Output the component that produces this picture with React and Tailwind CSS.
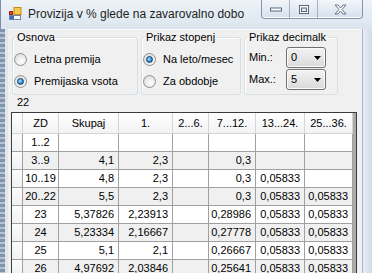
import React from "react";

const columns = [
  { title: "ZD", width: "w-[36px]" },
  { title: "Skupaj", width: "w-[60px]" },
  { title: "1.", width: "w-[54px]" },
  { title: "2...6.", width: "w-[36px]" },
  { title: "7...12.", width: "w-[47px]" },
  { title: "13...24.", width: "w-[49px]" },
  { title: "25...36.", width: "w-[48px]" },
];

const rows = [
  ["1..2", "", "", "", "", "", ""],
  ["3..9", "4,1", "2,3", "", "0,3", "", ""],
  ["10..19", "4,8", "2,3", "", "0,3", "0,05833", ""],
  ["20..22", "5,5", "2,3", "", "0,3", "0,05833", "0,05833"],
  ["23", "5,37826", "2,23913", "", "0,28986", "0,05833", "0,05833"],
  ["24", "5,23334", "2,16667", "", "0,27778", "0,05833", "0,05833"],
  ["25", "5,1", "2,1", "", "0,26667", "0,05833", "0,05833"],
  ["26", "4,97692", "2,03846", "", "0,25641", "0,05833", "0,05833"],
];

const AppIcon = () => (
  <svg width="16" height="16" viewBox="0 0 16 16">
    <rect x="6" y="1.5" width="7" height="7" fill="#f7c948" stroke="#c98a12" />
    <rect x="1.5" y="5.5" width="3" height="3" fill="#e0452f" stroke="#a82314" />
    <rect x="1.5" y="9.5" width="11" height="4" fill="#ffffff" stroke="#6d86ad" />
    <rect x="2" y="10" width="4" height="3" fill="#3c6fc4" />
  </svg>
);

const Radio = ({ checked, label }) => (
  <div className="flex items-center h-[14px]">
    <span className="w-[13px] h-[13px] rounded-full border border-[#8e8f8f] bg-[radial-gradient(circle_at_60%_65%,#ffffff,#d4d4d4)] flex items-center justify-center">
      {checked && (
        <span className="w-[7px] h-[7px] rounded-full border border-[#173f6e] bg-[radial-gradient(circle_at_40%_40%,#a6e6ff,#2a86cf_60%,#114c8c)]" />
      )}
    </span>
    <span className="ml-[7px]">{label}</span>
  </div>
);

const Combo = ({ value }) => (
  <div className="w-[40px] h-[21px] rounded-[3px] border border-[#707070] bg-gradient-to-b from-[#f3f3f3] to-[#dadada] shadow-[inset_0_0_0_1px_#fcfcfc] flex items-center justify-between pl-[4px] pr-[4px]">
    <span>{value}</span>
    <svg width="7" height="4" viewBox="0 0 7 4">
      <path d="M0 0h7L3.5 4z" fill="#000" />
    </svg>
  </div>
);

const GroupBox = ({ title, width, children }) => (
  <fieldset
    className={`${width} h-[65px] border border-[#d5dfe5] rounded-[3px] shadow-[inset_1px_1px_0_#fff]`}
  >
    <legend className="ml-[2px] px-[2px] leading-[14px]">{title}</legend>
    {children}
  </fieldset>
);

const App = () => {
  return (
    <div className="w-[372px] h-[273px] overflow-hidden bg-[#dbe4ee] font-['Liberation_Sans',Arial,sans-serif] text-[11px] text-black">
      {/* title bar */}
      <div className="h-[29px] flex items-start bg-gradient-to-b from-[#eef3f8] to-[#dbe4ee] border-l border-[#7d8fa6]">
        <div className="pl-[7px] pt-[6px]">
          <AppIcon />
        </div>
        <div className="ml-[4px] pt-[6px] text-[12px] leading-[16px] text-[#1e1e1e]">
          Provizija v % glede na zavarovalno dobo
        </div>
        <div className="ml-auto mr-[9px] flex h-[19px] border border-t-0 border-[#8395ad] rounded-b-[4px] bg-gradient-to-b from-[#f3f6fa] to-[#d6e0ec] shadow-[inset_0_-1px_0_#ffffff]">
          <div className="w-[28px] flex items-center justify-center border-r border-[#a3b2c5]">
            <svg width="12" height="5" viewBox="0 0 12 5">
              <rect x="0.5" y="1" width="11" height="3" fill="#fff" stroke="#5b6779" />
            </svg>
          </div>
          <div className="w-[28px] flex items-center justify-center border-r border-[#a3b2c5]">
            <svg width="10" height="9" viewBox="0 0 10 9">
              <rect x="0.5" y="0.5" width="9" height="8" fill="#fff" stroke="#5b6779" />
              <rect x="2.5" y="3" width="5" height="3.5" fill="#e3e8ef" stroke="#5b6779" />
            </svg>
          </div>
          <div className="w-[44px] flex items-center justify-center">
            <svg width="13" height="11" viewBox="0 0 13 11">
              <path
                d="M1 1h3l2.5 3L9 1h3L8 5.5 12 10H9L6.5 7 4 10H1l4-4.5z"
                fill="#fff"
                stroke="#5b6779"
                strokeWidth="0.9"
                strokeLinejoin="round"
              />
            </svg>
          </div>
        </div>
      </div>

      <div className="flex h-[244px]">
        {/* left frame */}
        <div className="w-[5px] bg-[repeating-linear-gradient(180deg,#7f93ad_0px,#7f93ad_3px,#b5c3d5_3px,#b5c3d5_5px)]" />
        <div className="w-[3px] bg-[#dfe6ee]" />

        {/* client */}
        <div className="w-[354px] bg-[#f0f0f0] border-t border-[#fbfcfd]">
          <div className="flex pl-[4px] gap-[3px]">
            <GroupBox title="Osnova" width="w-[126px]">
              <div className="flex flex-col gap-[8px] pt-[8px] pl-[1px]">
                <Radio label="Letna premija" />
                <Radio label="Premijaska vsota" checked />
              </div>
            </GroupBox>
            <GroupBox title="Prikaz stopenj" width="w-[100px]">
              <div className="flex flex-col gap-[8px] pt-[8px] pl-[1px]">
                <Radio label="Na leto/mesec" checked />
                <Radio label="Za obdobje" />
              </div>
            </GroupBox>
            <GroupBox title="Prikaz decimalk" width="w-[94px]">
              <div className="flex flex-col gap-[1px] pt-[3px] pl-[4px]">
                <div className="flex items-center">
                  <span className="w-[37px]">Min.:</span>
                  <Combo value="0" />
                </div>
                <div className="flex items-center">
                  <span className="w-[37px]">Max.:</span>
                  <Combo value="5" />
                </div>
              </div>
            </GroupBox>
          </div>

          <div className="pl-[9px] leading-[14px]">22</div>

          {/* data grid */}
          <div className="ml-[3px] mt-[3px] w-[346px] border border-[#3c3c3c] bg-[#ababab]">
            <div className="flex h-[21px] bg-gradient-to-b from-[#ffffff] to-[#f1f2f4] border-b border-[#d5d5d5] w-[341px]">
              <div className="w-[11px] border-r border-[#d5d5d5]" />
              {columns.map((c) => (
                <div
                  key={c.title}
                  className={`${c.width} border-r border-[#d5d5d5] flex items-center justify-center`}
                >
                  {c.title}
                </div>
              ))}
            </div>
            {rows.map((r, i) => (
              <div
                key={r[0]}
                className={`flex h-[18px] w-[341px] border-b border-[#a0a0a0] ${
                  i % 2 === 1 ? "bg-[#f0f0f0]" : "bg-white"
                }`}
              >
                <div className="w-[11px] border-r border-[#a0a0a0] bg-gradient-to-b from-[#fbfbfb] to-[#f0f1f3]" />
                {columns.map((c, j) => (
                  <div
                    key={c.title}
                    className={`${c.width} border-r border-[#a0a0a0] flex items-center ${
                      j === 0 ? "justify-center" : "justify-end pr-[4px]"
                    }`}
                  >
                    {r[j]}
                  </div>
                ))}
              </div>
            ))}
          </div>
        </div>

        {/* right frame */}
        <div className="w-[1px] bg-[#a9b7c8]" />
        <div className="w-[9px] bg-gradient-to-r from-[#e6edf5] to-[#cfdbe8]" />
      </div>
    </div>
  );
};

export default App;
